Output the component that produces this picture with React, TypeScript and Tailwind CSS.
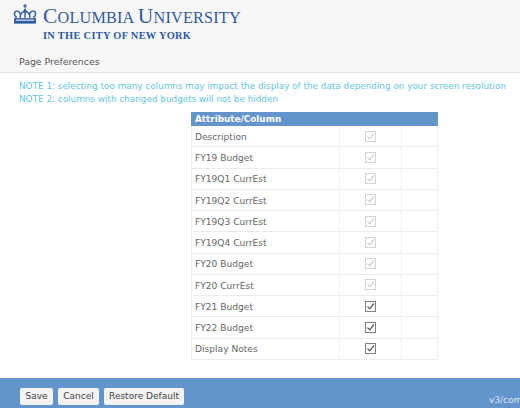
const rows = [
  { name: 'Description', locked: true },
  { name: 'FY19 Budget', locked: true },
  { name: 'FY19Q1 CurrEst', locked: true },
  { name: 'FY19Q2 CurrEst', locked: true },
  { name: 'FY19Q3 CurrEst', locked: true },
  { name: 'FY19Q4 CurrEst', locked: true },
  { name: 'FY20 Budget', locked: true },
  { name: 'FY20 CurrEst', locked: true },
  { name: 'FY21 Budget', locked: false },
  { name: 'FY22 Budget', locked: false },
  { name: 'Display Notes', locked: false },
];

function Crown() {
  return (
    <svg width="24" height="21" viewBox="0 0 26 23" fill="none" stroke="#2f5a9e" strokeWidth="1.6">
      <path d="M13 0v5M11 2h4" strokeWidth="1.4" />
      <circle cx="13" cy="7" r="1.6" fill="#2f5a9e" stroke="none" />
      <path d="M4 15C1 13 .5 9 3 8c3-1 5 2 5 4M22 15c3-2 3.500-6 1-7-3-1-5 2-5 4M8 15c-1-3 1-6 5-7 4 1 6 4 5 7M13 8v7" />
      <path d="M1 15.500h24v6H1z" fill="#2f5a9e" stroke="none" />
      <path d="M3 17h20v1.500H3z" fill="#fff" stroke="none" opacity="0.75" />
    </svg>
  );
}

function Check({ locked }: { locked: boolean }) {
  return (
    <span
      className={`flex h-[11px] w-[11px] items-center justify-center border bg-white ${
        locked ? 'border-[#d4d4d4] text-[#cfcfcf]' : 'border-[#808080] text-[#555]'
      }`}
    >
      <svg width="9" height="9" viewBox="0 0 9 9" fill="none" stroke="currentColor" strokeWidth="1.2">
        <path d="M1.500 4.500L3.700 6.800L8 1.500" />
      </svg>
    </span>
  );
}

function Btn({ label, className }: { label: string; className: string }) {
  return (
    <button className={`h-[17px] rounded-[2px] bg-[#f3f3f3] text-center text-[9px] leading-[17px] whitespace-nowrap text-[#444] ${className}`}>
      {label}
    </button>
  );
}

export default function App() {
  return (
    <div className="flex h-[408px] w-[520px] flex-col overflow-hidden bg-white font-['DejaVu_Sans',Verdana,sans-serif]">
      <div className="h-[47px] bg-[#f7f7f7] pl-[13px] pt-[4px]">
        <div className="flex gap-[6px]">
          <Crown />
          <div className="font-['Liberation_Serif',serif] text-[#2f5a9e]">
            <div className="mt-[3px] whitespace-nowrap text-[16.200px] leading-[18px] tracking-[0.2px]">
              <span className="text-[21.500px]">C</span>OLUMBIA <span className="text-[21.500px]">U</span>NIVERSITY
            </div>
            <div className="mt-[3px] whitespace-nowrap text-[10.400px] font-bold leading-[12px] tracking-[0.3px]">
              IN THE CITY OF NEW YORK
            </div>
          </div>
        </div>
      </div>
      <div className="h-[26px] border-b border-[#e3e3e3] bg-[#f7f7f7] pl-[19px] text-[9.350px] leading-[29px] text-[#555]">
        Page Preferences
      </div>
      <div className="pl-[19px] pt-[7px] text-[8.850px] leading-[13px] whitespace-nowrap text-[#62c5e4]">
        <div>NOTE 1: selecting too many columns may impact the display of the data depending on your screen resolution</div>
        <div>NOTE 2: columns with changed budgets will not be hidden</div>
      </div>
      <div className="ml-[191px] mt-[6px] w-[247px]">
        <div className="h-[14px] bg-[#6394cb] pl-[4px] text-[8.850px] font-bold leading-[14px] text-white">
          Attribute/Column
        </div>
        {rows.map((row) => (
          <div key={row.name} className="grid h-[21.250px] grid-cols-[147px_62px_38px] border-b border-l border-r border-[#ececec]">
            <div className="flex items-center pl-[3px] pt-[3px] text-[9.100px] text-[#666]">{row.name}</div>
            <div className="flex items-center justify-center border-l border-[#f0f0f0]">
              <Check locked={row.locked} />
            </div>
            <div className="border-l border-[#f0f0f0]" />
          </div>
        ))}
      </div>
      <div className="mt-auto flex h-[30px] items-start justify-between bg-[#6394cb] pl-[20px] pt-[10px]">
        <div className="flex gap-[5px]">
          <Btn label="Save" className="w-[33px]" />
          <Btn label="Cancel" className="w-[41px]" />
          <Btn label="Restore Default" className="w-[80px]" />
        </div>
        <div className="w-[31px] overflow-hidden whitespace-nowrap pt-[3px] text-[9px] leading-[18px] text-[#dce8f5]">v3/common</div>
      </div>
    </div>
  );
}
